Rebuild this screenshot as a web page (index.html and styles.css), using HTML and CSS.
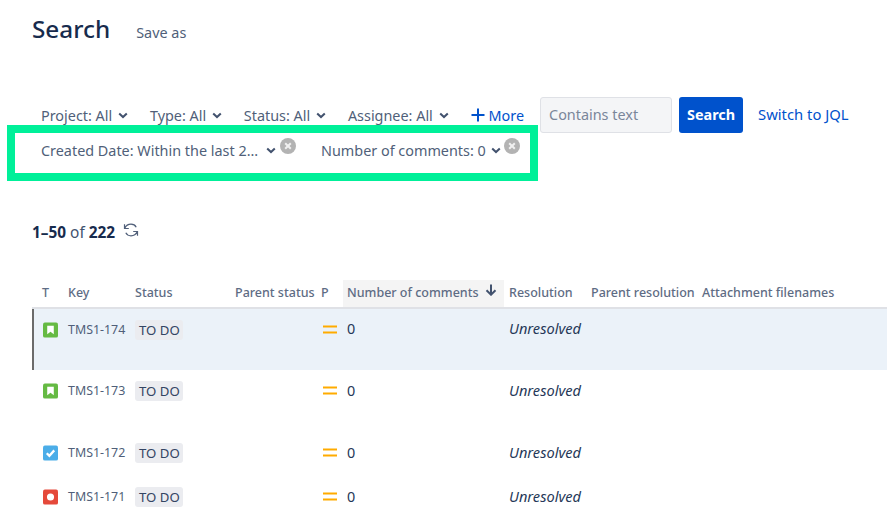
FILE: index.html
```html
<!DOCTYPE html>
<html lang="en">
<head>
<meta charset="utf-8">
<title>Search</title>
<link rel="stylesheet" href="styles.css">
</head>
<body>
<header class="head">
  <h1 class="title">Search</h1>
  <span class="save">Save as</span>
</header>
<section class="filters">
  <div class="row-one">
    <span class="filter">Project: All <svg class="chev" viewBox="0 0 10 7"><path d="M1.2 1.4 5 5l3.8-3.6"/></svg></span>
    <span class="filter">Type: All <svg class="chev" viewBox="0 0 10 7"><path d="M1.2 1.4 5 5l3.8-3.6"/></svg></span>
    <span class="filter">Status: All <svg class="chev" viewBox="0 0 10 7"><path d="M1.2 1.4 5 5l3.8-3.6"/></svg></span>
    <span class="filter">Assignee: All <svg class="chev" viewBox="0 0 10 7"><path d="M1.2 1.4 5 5l3.8-3.6"/></svg></span>
    <span class="more"><svg class="plus" viewBox="0 0 14 14"><path d="M7 .5v13M.5 7h13"/></svg>More</span>
    <span class="textbox">Contains text</span>
    <span class="btn">Search</span>
    <span class="jql">Switch to JQL</span>
  </div>
  <div class="row-two">
    <span class="filter f-date">Created Date: Within the last 2... <svg class="chev" viewBox="0 0 10 7"><path d="M1.2 1.4 5 5l3.8-3.6"/></svg></span>
    <svg class="clear" viewBox="0 0 16 16"><circle cx="8" cy="8" r="8"/><path d="M5.2 5.2l5.6 5.6M10.8 5.2l-5.6 5.6"/></svg>
    <span class="filter f-num">Number of comments: 0 <svg class="chev" viewBox="0 0 10 7"><path d="M1.2 1.4 5 5l3.8-3.6"/></svg></span>
    <svg class="clear" viewBox="0 0 16 16"><circle cx="8" cy="8" r="8"/><path d="M5.2 5.2l5.6 5.6M10.8 5.2l-5.6 5.6"/></svg>
  </div>
</section>
<div class="count">
  <span><b>1–50</b> of <b>222</b></span>
  <svg class="refresh" viewBox="0 0 16 14"><path d="M1.500 1.200v4.300h4.300M1.800 5.200C3 2.500 5.500 1.200 8 1.200c2.500 0 4.300 1.200 5.200 3"/><path d="M14.500 12.800V8.500h-4.300M14.200 8.800C13 11.500 10.500 12.800 8 12.800c-2.500 0-4.300-1.200-5.200-3"/></svg>
</div>
<table class="issues">
  <colgroup>
    <col class="c-t"><col class="c-key"><col class="c-status"><col class="c-parent"><col class="c-p"><col class="c-num"><col class="c-res"><col class="c-pres"><col class="c-att">
  </colgroup>
  <thead>
    <tr>
      <th class="pad">T</th><th class="pad">Key</th><th>Status</th><th>Parent status</th><th>P</th>
      <th class="sorted">Number of comments<svg class="arrow" viewBox="0 0 12 12"><path d="M6 .5v10M1.500 6.200 6 10.700l4.500-4.500"/></svg></th>
      <th>Resolution</th><th>Parent resolution</th><th>Attachment filenames</th>
    </tr>
  </thead>
  <tbody>
    <tr class="r1 selected">
      <td class="tcell"><svg class="type" viewBox="0 0 16 16"><rect width="16" height="16" rx="2" fill="#65ba43"/><path d="M4.500 3.500h7v9L8 9.800l-3.500 2.700z" fill="#fff"/></svg></td>
      <td class="key">TMS1-174</td><td><span class="lozenge">TO DO</span></td><td></td>
      <td><svg class="prio" viewBox="0 0 14 10"><path d="M0 1.500h14M0 7.500h14"/></svg></td>
      <td class="num">0</td><td class="res">Unresolved</td><td></td><td></td>
    </tr>
    <tr class="r2">
      <td class="tcell"><svg class="type" viewBox="0 0 16 16"><rect width="16" height="16" rx="2" fill="#65ba43"/><path d="M4.500 3.500h7v9L8 9.800l-3.500 2.700z" fill="#fff"/></svg></td>
      <td class="key">TMS1-173</td><td><span class="lozenge">TO DO</span></td><td></td>
      <td><svg class="prio" viewBox="0 0 14 10"><path d="M0 1.500h14M0 7.500h14"/></svg></td>
      <td class="num">0</td><td class="res">Unresolved</td><td></td><td></td>
    </tr>
    <tr class="r3">
      <td class="tcell"><svg class="type" viewBox="0 0 16 16"><rect width="16" height="16" rx="2" fill="#4bade8"/><path d="M4 8.200l2.800 2.800L12 5.200" fill="none" stroke="#fff" stroke-width="2.400"/></svg></td>
      <td class="key">TMS1-172</td><td><span class="lozenge">TO DO</span></td><td></td>
      <td><svg class="prio" viewBox="0 0 14 10"><path d="M0 1.500h14M0 7.500h14"/></svg></td>
      <td class="num">0</td><td class="res">Unresolved</td><td></td><td></td>
    </tr>
    <tr class="r4">
      <td class="tcell"><svg class="type" viewBox="0 0 16 16"><rect width="16" height="16" rx="2" fill="#e5493a"/><circle cx="8" cy="8" r="3.800" fill="#fff"/></svg></td>
      <td class="key">TMS1-171</td><td><span class="lozenge">TO DO</span></td><td></td>
      <td><svg class="prio" viewBox="0 0 14 10"><path d="M0 1.500h14M0 7.500h14"/></svg></td>
      <td class="num">0</td><td class="res">Unresolved</td><td></td><td></td>
    </tr>
  </tbody>
</table>
</body>
</html>
```
FILE: styles.css
```css
* { box-sizing: border-box; }
html, body { height: 100%; overflow: hidden; }
body {
  margin: 0;
  background: #fff;
  color: #172b4d;
  font-family: "Noto Sans", "Open Sans", sans-serif;
  font-size: 14.4px;
}
.head {
  display: flex;
  align-items: baseline;
  gap: 26px;
  padding: 11px 0 0 32px;
  height: 97px;
}
.title { margin: 0; font-size: 24.3px; font-weight: 500; line-height: 36px; color: #172b4d; }
.save { color: #505f79; }
.row-one {
  display: flex;
  align-items: center;
  height: 36px;
  padding-left: 41px;
}
.filter { color: #505f79; white-space: nowrap; display: inline-flex; align-items: center; gap: 6px; margin-right: 21.7px; }
.chev { width: 10px; height: 7px; fill: none; stroke: #42526e; stroke-width: 2; }
.more { display: inline-flex; align-items: center; gap: 4px; color: #0052cc; white-space: nowrap; }
.plus { width: 14px; height: 14px; fill: none; stroke: #0052cc; stroke-width: 2; }
.textbox {
  width: 132px; height: 36px; margin-left: 16px;
  background: #f4f5f7; border: 1px solid #dfe1e6; border-radius: 3px;
  padding-left: 8px; line-height: 34px; color: #7a869a;
}
.btn {
  width: 64px; height: 36px; margin-left: 7px;
  background: #0052cc; border-radius: 3px;
  color: #fff; font-weight: 700; text-align: center; line-height: 36px;
}
.jql { margin-left: 15px; font-size: 14.8px; color: #0052cc; position: relative; top: -1px; white-space: nowrap; }
.row-two {
  display: flex;
  align-items: center;
  width: 531px;
  height: 56px;
  margin: -8px 0 0 7px;
  padding: 0 0 6px 26px;
  border: 8px solid #00f099;
}
.f-date { margin-right: 4px; width: 235px; justify-content: space-between; gap: 0; }
.f-num { margin-left: 25px; margin-right: 3px; gap: 5px; }
.clear { width: 16px; height: 16px; position: relative; top: -4px; flex: none; }
.clear circle { fill: #b3b3b3; }
.clear path { stroke: #f0f0f0; stroke-width: 2; fill: none; }
.count { display: flex; align-items: flex-start; gap: 8px; margin: 42px 0 0 32px; height: 24px; font-size: 15.4px; line-height: 20px; color: #42526e; }
.count b { color: #172b4d; font-weight: 700; }
.refresh { width: 16px; height: 14px; fill: none; stroke: #505f79; stroke-width: 1.200; }
.issues {
  table-layout: fixed;
  border-collapse: collapse;
  width: 855px;
  margin: 33px 0 0 32px;
}
.c-t { width: 26px; } .c-key { width: 77px; } .c-status { width: 100px; } .c-parent { width: 86px; }
.c-p { width: 22px; } .c-num { width: 166px; } .c-res { width: 82px; } .c-pres { width: 111px; } .c-att { width: 185px; }
th {
  height: 28px; padding: 0 0 2px 0;
  border-bottom: 2px solid #dfe1e6;
  text-align: left; font-size: 12.5px; font-weight: 500; color: #5e6c84; white-space: nowrap;
}
th.pad { padding-left: 10px; }
th.sorted {
  padding-left: 4px;
  background: linear-gradient(#f4f4f4, #f4f4f4) no-repeat;
  background-size: calc(100% - 5px) 100%;
}
.arrow { width: 12px; height: 12px; fill: none; stroke: #42526e; stroke-width: 2; margin-left: 6px; vertical-align: 1px; }
td { vertical-align: top; padding: 11px 0 0; color: #172b4d; white-space: nowrap; }
.tcell { padding-left: 11px; }
tr.r1 td { height: 62px; }
tr.r2 td { height: 62px; }
tr.r3 td, tr.r4 td { height: 44px; }
tr.selected td { background: #ebf2f9; }
tr.selected td:first-child { box-shadow: inset 2px 0 0 #6b6b6b; }
.type { display: block; width: 15px; height: 16px; margin-top: 2px; }
.key { font-size: 12.4px; color: #505f79; padding-left: 10px; line-height: 20px; }
.lozenge {
  display: inline-block; padding: 0 4px; width: 48px; height: 20px; line-height: 21px;
  background: #ebecf0; border-radius: 3px; color: #344563;
  font-size: 13.2px; font-weight: 400;
}
.prio { display: block; width: 14px; height: 10px; margin: 5px 0 0 2px; fill: none; stroke: #ffab00; stroke-width: 2; }
.num, .res { line-height: 19px; color: #253858; }
.num { padding-left: 4px; }
.res { font-style: italic; font-size: 14.6px; }
tr.r1 .num, tr.r1 .res { padding-top: 10px; }
```
